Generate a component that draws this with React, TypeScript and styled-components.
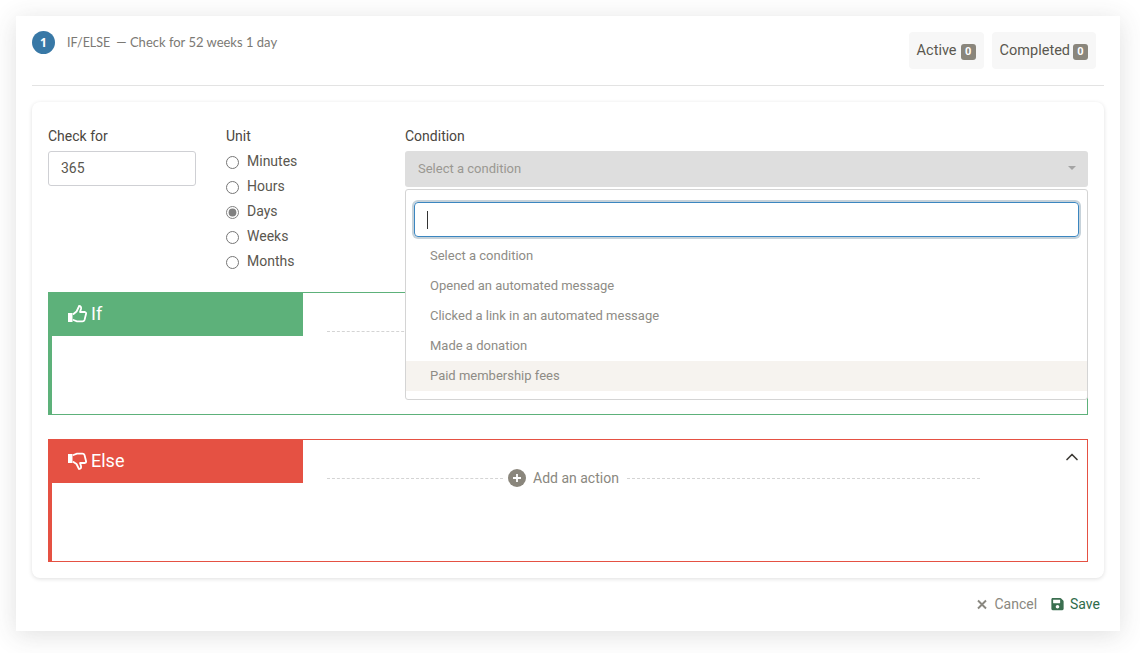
import React from "react";
import styled, { createGlobalStyle } from "styled-components";
import { FaSave } from "react-icons/fa";
import { ChevronUp } from "lucide-react";

const Global = createGlobalStyle`
  html, body { margin: 0; padding: 0; background: #fff; }
  body { font-family: Roboto, "Liberation Sans", sans-serif; color: #4a4640; font-size: 14px; }
  * { box-sizing: border-box; }
`;

const Page = styled.div`
  width: 1140px;
  height: 653px;
  padding: 16px 20px 22px 16px;
  overflow: hidden;
`;

const Sheet = styled.section`
  height: 615px;
  background: #fff;
  box-shadow: 0 4px 24px rgba(60, 60, 60, 0.16);
  padding: 15px 16px 0;
`;

const Header = styled.header`
  display: flex;
  justify-content: space-between;
  height: 55px;
  border-bottom: 1px solid #e3e3e3;
`;

const Title = styled.div`
  display: flex;
  align-items: flex-start;
  color: #7b7974;
  font-family: Lato, "Open Sans", sans-serif;
  font-size: 12.5px;
  line-height: 23px;
`;

const StepNumber = styled.span`
  width: 23px;
  height: 23px;
  border-radius: 50%;
  background: #3878a6;
  color: #fff;
  font-family: "Open Sans", sans-serif;
  font-weight: 700;
  font-size: 12px;
  line-height: 23px;
  text-align: center;
  margin-right: 12px;
`;

const TitleDetail = styled.span`
  margin-left: 6px;
  font-size: 13px;
`;

const Stats = styled.div`
  display: flex;
  gap: 8px;
  padding: 1px 8px 0 0;
`;

const Stat = styled.div`
  min-width: 75px;
  height: 37px;
  padding: 0 8px;
  display: flex;
  align-items: center;
  justify-content: space-between;
  gap: 3px;
  background: #f7f7f7;
  border-radius: 4px;
  font-size: 14.5px;
  color: #5a574f;
`;

const Count = styled.span`
  min-width: 15px;
  height: 16px;
  border-radius: 3px;
  background: #8a867c;
  color: #fff;
  font-size: 11px;
  font-weight: 700;
  line-height: 16px;
  text-align: center;
  margin-top: 2px;
`;

const Panel = styled.div`
  height: 476px;
  margin-top: 16px;
  padding: 16px;
  border-radius: 8px;
  background: #fff;
  box-shadow: 0 1px 4px rgba(0, 0, 0, 0.13);
`;

const FormRow = styled.div`
  display: grid;
  grid-template-columns: 178px 179px 1fr;
  height: 174px;
`;

const Field = styled.div`
  position: relative;
`;

const Label = styled.div`
  font-size: 14px;
  line-height: 17px;
  padding-top: 10px;
  box-sizing: content-box;
  height: 17px;
  margin-bottom: 6px;
  color: #4a4640;
`;

const NumberInput = styled.input`
  display: block;
  width: 148px;
  height: 35px;
  padding: 0 12px 1px;
  border: 1px solid #cfd0d4;
  border-radius: 3px;
  font: 14px Roboto, sans-serif;
  color: #5a574f;
  background: #fff;
`;

const Radios = styled.div`
  margin-top: -3px;
`;

const RadioRow = styled.label`
  display: flex;
  align-items: center;
  gap: 8px;
  height: 25px;
  color: #5a574f;
  font-size: 14px;
`;

const Radio = styled.input`
  margin: 3px 0 0;
  width: 13px;
  height: 13px;
  accent-color: #808080;
`;

const SelectBox = styled.div`
  height: 36px;
  padding: 0 13px 2px;
  display: flex;
  align-items: center;
  justify-content: space-between;
  border-radius: 3px;
  background: #dedede;
  color: #9a9892;
  font-size: 13px;
`;

const Caret = styled.span`
  width: 0;
  height: 0;
  border-left: 4px solid transparent;
  border-right: 4px solid transparent;
  border-top: 4px solid #a4a4a4;
  margin-right: -1px;
`;

const Dropdown = styled.div`
  position: absolute;
  z-index: 2;
  top: 71px;
  left: 0;
  right: 0;
  height: 211px;
  padding: 12px 8px 0;
  background: #fff;
  border: 1px solid #d4d4d4;
  border-radius: 3px;
`;

const Search = styled.div`
  height: 35px;
  padding-left: 12px;
  margin-bottom: 4px;
  display: flex;
  align-items: center;
  border: 1px solid #3b86c0;
  border-radius: 4px;
  box-shadow: 0 0 0 2px #c6d2da;
`;

const Cursor = styled.span`
  width: 1px;
  height: 18px;
  background: #333;
`;

const OptionList = styled.ul`
  list-style: none;
  margin: 0 -8px;
  padding: 0;
`;

const Option = styled.li<{ $active?: boolean }>`
  height: 30px;
  line-height: 30px;
  padding-left: 24px;
  font-size: 13px;
  color: #8e8c86;
  background: ${(p) => (p.$active ? "#f6f3ef" : "transparent")};
`;

const Branch = styled.div<{ $color: string }>`
  position: relative;
  display: flex;
  height: 123px;
  margin-bottom: 24px;
  border: 1px solid ${(p) => p.$color};
  border-left-width: 4px;
`;

const BranchTag = styled.div<{ $color: string }>`
  width: 251px;
  height: 44px;
  margin: -1px 0 0;
  padding: 0 0 1px 16px;
  display: flex;
  align-items: center;
  gap: 4px;
  background: ${(p) => p.$color};
  color: #fff;
  font-size: 18px;
`;

const ThumbIcon = styled.svg`
  width: 19px;
  height: 18px;
  flex: none;
`;

const ActionRow = styled.div`
  position: absolute;
  left: 275px;
  top: 29px;
  width: 653px;
  display: flex;
  align-items: center;
  gap: 8px;
  color: #8a8880;
  font-size: 14px;
  white-space: nowrap;
`;

const DashLine = styled.span`
  flex: 1;
  border-top: 1px dashed #d4d4d4;
`;

const ShortDash = styled(DashLine)`
  flex: 0 0 176px;
  margin-right: -3px;
`;

const AddIcon = styled.svg`
  width: 18px;
  height: 18px;
  flex: none;
  margin-right: -1px;
`;

const Collapse = styled(ChevronUp)`
  position: absolute;
  top: 7px;
  right: 5px;
  width: 20px;
  height: 20px;
  color: #3d3a36;
`;

const Footer = styled.footer`
  display: flex;
  justify-content: flex-end;
  align-items: center;
  gap: 14px;
  height: 52px;
  padding: 0 4px 0 0;
`;

const FooterButton = styled.span<{ $color: string }>`
  display: flex;
  align-items: center;
  gap: 6px;
  color: ${(p) => p.$color};
  font-size: 14px;
`;

const CancelIcon = styled.svg`
  width: 11px;
  height: 11px;
  flex: none;
`;

const SaveIcon = styled(FaSave)`
  width: 13px;
  height: 14px;
  color: #3b6f50;
`;

function ThumbUp() {
  return (
    <ThumbIcon viewBox="0 0 19 18" fill="none">
      <rect x="0" y="8" width="4.5" height="9" fill="#fff" />
      <path
        d="M5.5 9 L8.5 6.5 L10.5 2.5 L11 1 Q13.5 1 13 4 L12 7 L17 7 Q18.4 7.4 18 9 L16.5 15 Q16 16.3 14.5 16.3 L9 16.3 L5.5 15"
        stroke="#fff"
        strokeWidth="1.8"
        strokeLinejoin="round"
        strokeLinecap="round"
      />
    </ThumbIcon>
  );
}

function ThumbDown() {
  return (
    <ThumbIcon viewBox="0 0 19 18" fill="none">
      <rect x="0" y="2" width="4.5" height="9" fill="#fff" />
      <path
        d="M5.5 10 L8.5 12 L10.5 16 L11 17 Q13.5 17 13 14 L12 11 L17 11 Q18.4 10.6 18 9 L16.5 3 Q16 1.7 14.5 1.7 L9 1.7 L5.5 3"
        stroke="#fff"
        strokeWidth="1.8"
        strokeLinejoin="round"
        strokeLinecap="round"
      />
    </ThumbIcon>
  );
}

function BranchBox({ color, tag, icon }: { color: string; tag: string; icon: React.ReactNode }) {
  return (
    <Branch $color={color}>
      <BranchTag $color={color}>
        {icon}
        {tag}
      </BranchTag>
      <ActionRow>
        <ShortDash />
        <AddIcon viewBox="0 0 18 18">
          <circle cx="9" cy="9" r="9" fill="#8a867c" />
          <path d="M9 5v8M5 9h8" stroke="#fff" strokeWidth="1.8" />
        </AddIcon>
        <span>Add an action</span>
        <DashLine />
      </ActionRow>
      <Collapse strokeWidth={2} />
    </Branch>
  );
}

export default function App() {
  const units = ["Minutes", "Hours", "Days", "Weeks", "Months"];
  const options = [
    "Select a condition",
    "Opened an automated message",
    "Clicked a link in an automated message",
    "Made a donation",
    "Paid membership fees",
  ];
  return (
    <Page>
      <Global />
      <Sheet>
        <Header>
          <Title>
            <StepNumber>1</StepNumber>
            <span>IF/ELSE</span>
            <TitleDetail>— Check for 52 weeks 1 day</TitleDetail>
          </Title>
          <Stats>
            <Stat>Active <Count>0</Count></Stat>
            <Stat>Completed <Count>0</Count></Stat>
          </Stats>
        </Header>
        <Panel>
          <FormRow>
            <div>
              <Label>Check for</Label>
              <NumberInput defaultValue="365" />
            </div>
            <div>
              <Label>Unit</Label>
              <Radios>
                {units.map((u) => (
                  <RadioRow key={u}>
                    <Radio type="radio" name="unit" defaultChecked={u === "Days"} />
                    {u}
                  </RadioRow>
                ))}
              </Radios>
            </div>
            <Field>
              <Label>Condition</Label>
              <SelectBox>
                Select a condition
                <Caret />
              </SelectBox>
              <Dropdown>
                <Search>
                  <Cursor />
                </Search>
                <OptionList>
                  {options.map((o) => (
                    <Option key={o} $active={o === "Paid membership fees"}>{o}</Option>
                  ))}
                </OptionList>
              </Dropdown>
            </Field>
          </FormRow>
          <BranchBox color="#5db17a" tag="If" icon={<ThumbUp />} />
          <BranchBox color="#e55143" tag="Else" icon={<ThumbDown />} />
        </Panel>
        <Footer>
          <FooterButton $color="#8a8880">
            <CancelIcon viewBox="0 0 11 11">
              <path d="M1 1.5l8 8M9 1.5l-8 8" stroke="#8a8880" strokeWidth="1.9" fill="none" />
            </CancelIcon>
            Cancel
          </FooterButton>
          <FooterButton $color="#2f6b4a"><SaveIcon />Save</FooterButton>
        </Footer>
      </Sheet>
    </Page>
  );
}
